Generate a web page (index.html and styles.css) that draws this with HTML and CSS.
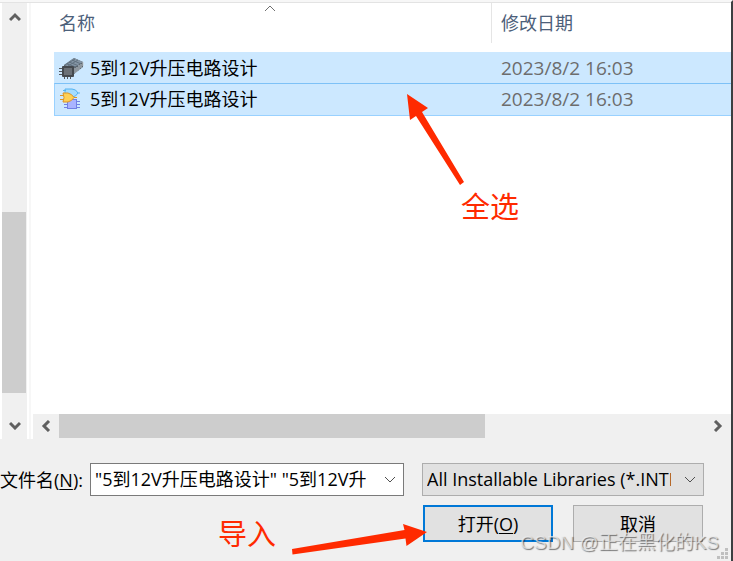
FILE: index.html
```html
<!DOCTYPE html>
<html lang="zh-CN">
<head>
    <meta charset="UTF-8">
    <meta name="viewport" content="width=device-width, initial-scale=1.0">
    <title>打开</title>
    <link rel="stylesheet" href="styles.css">
</head>
<body>
    <div class="dialog">
        <div class="browser">
            <div class="scrollbar scrollbar-y">
                <button class="scroll-btn" type="button" aria-label="向上滚动">
                    <svg width="12" height="10" viewBox="0 0 12 10"><path d="M1 8L6 3L11 8" /></svg>
                </button>
                <div class="track-y"><div class="thumb-y"></div></div>
                <button class="scroll-btn" type="button" aria-label="向下滚动">
                    <svg width="12" height="10" viewBox="0 0 12 10"><path d="M1 3L6 8L11 3" /></svg>
                </button>
            </div>

            <div class="file-pane">
                <table class="file-table">
                    <colgroup>
                        <col class="col-name">
                        <col>
                    </colgroup>
                    <thead>
                        <tr>
                            <th scope="col">名称
                                <svg class="sort-mark" width="12" height="8" viewBox="0 0 12 8"><path d="M1 7L6 2L11 7" /></svg>
                            </th>
                            <th scope="col" class="date-head">修改日期</th>
                        </tr>
                    </thead>
                    <tbody>
                        <tr class="file-row">
                            <td>
                                <div class="file-name">
                                    <svg class="file-icon" width="25" height="22" viewBox="0 0 25 22">
                                        <path d="M5 8L15 1L24 5V10L15 17L5 13Z" fill="#5a636b" />
                                        <path d="M5 8L15 1L24 5L14 11Z" fill="#8495a5" />
                                        <path d="M8 7L17 10M10 5L20 9M13 3L22 7M9 9L19 3M6 8L16 2" stroke="#61717f" stroke-width="1" />
                                        <path d="M16 11V16M18 10V15M20 8V13M22 7V11M24 5V9" stroke="#c3ccd3" stroke-width="1" />
                                        <rect x="3" y="9" width="12" height="11" rx="1" fill="#45494e" />
                                        <rect x="5" y="11" width="8" height="7" fill="#6b7076" />
                                        <path d="M0 11.5H3M0 14.5H3M0 17.5H3M5.5 20V22M8.5 20V22M11.5 20V22" stroke="#54585d" stroke-width="1" />
                                    </svg>
                                    <span>5到12V升压电路设计</span>
                                </div>
                            </td>
                            <td class="date">2023/8/2 16:03</td>
                        </tr>
                        <tr class="file-row focused">
                            <td>
                                <div class="file-name">
                                    <svg class="file-icon" width="25" height="22" viewBox="0 0 25 22">
                                        <path d="M6 1H13Q17 1 19 5Q17 9 13 9H6Z" fill="#a4dcff" stroke="#58b4f0" />
                                        <path d="M18 5H21M4 2.500H7" stroke="#58b4f0" stroke-width="1" />
                                        <rect x="8.500" y="11.500" width="9" height="9" fill="#a9b3ff" stroke="#7180e4" />
                                        <path d="M5 13.5H8M5 16.5H8M5 19.5H8M18 13.5H21M18 16.5H21M18 19.5H21" stroke="#7180e4" stroke-width="1" />
                                        <path d="M4 5H9Q13 6 15 9.500Q13 13 9 14H4Q6 9.500 4 5Z" fill="#ffd055" stroke="#dc9527" />
                                        <path d="M1 7.500H5M1 11.500H5M15 9.500H18" stroke="#dc9527" stroke-width="1" />
                                    </svg>
                                    <span>5到12V升压电路设计</span>
                                </div>
                            </td>
                            <td class="date">2023/8/2 16:03</td>
                        </tr>
                    </tbody>
                </table>

                <div class="scrollbar scrollbar-x">
                    <button class="scroll-btn" type="button" aria-label="向左滚动">
                        <svg width="10" height="12" viewBox="0 0 10 12"><path d="M8 1L3 6L8 11" /></svg>
                    </button>
                    <div class="track-x"><div class="thumb-x"></div></div>
                    <button class="scroll-btn" type="button" aria-label="向右滚动">
                        <svg width="10" height="12" viewBox="0 0 10 12"><path d="M2 1L7 6L2 11" /></svg>
                    </button>
                </div>
            </div>
        </div>

        <form class="footer">
            <div class="fields">
                <label class="name-label" for="filename">文件名(<u>N</u>):</label>
                <div class="combo">
                    <input id="filename" type="text" value='"5到12V升压电路设计" "5到12V升压电路设计"'>
                    <button class="combo-btn" type="button" aria-label="历史记录">
                        <svg width="12" height="8" viewBox="0 0 12 8"><path d="M1 1L6 6L11 1" /></svg>
                    </button>
                </div>
                <div class="filter">
                    <select aria-label="文件类型">
                        <option>All Installable Libraries (*.INTLIB;*.SCHLIB;*.PCBLIB)</option>
                    </select>
                    <svg class="filter-mark" width="12" height="8" viewBox="0 0 12 8"><path d="M1 1L6 6L11 1" /></svg>
                </div>
            </div>
            <div class="actions">
                <button class="btn btn-default" type="button">打开(<u>O</u>)</button>
                <button class="btn" type="button">取消</button>
            </div>
        </form>

        <svg class="grip" width="12" height="12" viewBox="0 0 12 12">
            <path d="M8 0h3v3h-3zM4 4h3v3h-3zM8 4h3v3h-3zM0 8h3v3h-3zM4 8h3v3h-3zM8 8h3v3h-3z" />
        </svg>

        <!-- notes drawn over the dialog -->
        <svg class="arrow arrow-select" width="58" height="92" viewBox="0 0 58 92">
            <path d="M1 0L22 14L16 18L58 88L54 91L10 22L4 26Z" />
        </svg>
        <span class="note note-select">全选</span>
        <svg class="arrow arrow-import" width="136" height="32" viewBox="0 0 136 32">
            <path d="M135 9L111 1L112.500 7L0 26L0.500 31.500L113.500 15.500L114.500 23Z" />
        </svg>
        <span class="note note-import">导入</span>
        <span class="watermark">CSDN @正在黑化的KS</span>
    </div>
</body>
</html>
```

FILE: styles.css
```css
:root {
    --panel: #f0f0f0;
    --thumb: #cdcdcd;
    --selected: #cce8ff;
    --selected-border: #99d1ff;
    --accent: #0078d7;
    --note: #ff2a00;
}

* {
    margin: 0;
    padding: 0;
    box-sizing: border-box;
}

body {
    font-family: "Open Sans", "Noto Sans CJK SC", sans-serif;
    font-size: 18px;
    line-height: 24px;
    color: #000;
    background: var(--panel);
}

input,
select,
button {
    font: inherit;
    color: inherit;
}

svg {
    display: block;
    fill: none;
}

.dialog {
    position: relative;
    display: flex;
    flex-direction: column;
    min-height: 100vh;
    border-top: 2px solid #f7f7f7;
    border-right: 2px solid #3c3f41;
    overflow: hidden;
}

.browser {
    flex: 1;
    display: flex;
    padding-left: 2px;
    border-top: 1px solid #e3e3e3;
    background: #fff;
}

/* scrollbars */
.scrollbar {
    display: flex;
    background: var(--panel);
}

.scrollbar-y {
    flex-direction: column;
    width: 25px;
}

.scroll-btn {
    display: flex;
    align-items: center;
    justify-content: center;
    width: 26px;
    height: 24px;
    border: none;
    background: none;
}

.scroll-btn svg {
    stroke: #606060;
    stroke-width: 3;
}

.scrollbar-y .scroll-btn {
    width: 25px;
    height: 28px;
}

.track-y {
    flex: 1;
    display: flex;
    flex-direction: column;
    justify-content: flex-end;
    padding: 0 1px 18px 0;
}

.thumb-y {
    height: 50%;
    background: var(--thumb);
}

.track-x {
    flex: 1;
}

.thumb-x {
    width: 66%;
    height: 24px;
    background: var(--thumb);
}

/* file list */
.file-pane {
    flex: 1;
    min-width: 0;
    display: flex;
    flex-direction: column;
    justify-content: space-between;
    margin-left: 2px;
    border-left: 2px solid #f7f7f7;
}

.scrollbar-x {
    margin-left: 2px;
    padding-bottom: 1px;
}

.file-table {
    margin-left: 23px;
    table-layout: fixed;
    border-collapse: separate;
    border-spacing: 0;
}

.col-name {
    width: 437px;
}

.file-table th {
    position: relative;
    height: 40px;
    padding-left: 5px;
    text-align: left;
    font-weight: normal;
    color: #4c607a;
}

.file-table .date-head {
    padding-left: 9px;
    border-left: 1px solid #e5e5e5;
}

.file-table thead::after {
    content: "";
    display: block;
    height: 9px;
}

.sort-mark {
    position: absolute;
    top: 1px;
    left: 210px;
    stroke: #707070;
}

.file-row td {
    height: 31px;
    background: var(--selected);
}

.file-row.focused td {
    height: 33px;
    padding-bottom: 2px;
    border-top: 1px solid #7dc1f7;
    border-bottom: 1px solid var(--selected-border);
}

.file-row.focused td:first-child {
    border-left: 1px solid var(--selected-border);
}

.file-name {
    display: flex;
    align-items: center;
    gap: 6px;
    padding-left: 5px;
}

.focused .file-name {
    padding-left: 4px;
}

.file-row .date {
    padding-left: 10px;
    font-size: 19px;
    color: #6d6d6d;
}

/* file name and buttons */
.footer {
    display: flex;
    flex-direction: column;
    gap: 9px;
    padding: 24px 27px 19px 0;
}

.fields {
    display: flex;
    align-items: center;
}

.name-label {
    width: 90px;
    padding-right: 8px;
    text-align: right;
    white-space: nowrap;
}

u {
    text-underline-offset: 2px;
    text-decoration-thickness: 1px;
}

.combo {
    flex: 1;
    min-width: 0;
    display: flex;
    height: 33px;
    margin-right: 18px;
    border: 1px solid #7a7a7a;
    background: #fff;
}

.combo input {
    flex: 1;
    min-width: 0;
    padding: 0 10px 2px 4px;
    border: none;
    outline: none;
    background: none;
}

.combo-btn {
    display: flex;
    align-items: center;
    justify-content: center;
    width: 27px;
    border: none;
    background: none;
}

.combo-btn svg,
.filter-mark {
    stroke: #505050;
}

.filter {
    position: relative;
    width: 282px;
}

.filter select {
    display: block;
    width: 100%;
    height: 33px;
    padding: 0 32px 2px 4px;
    border: 1px solid #adadad;
    border-radius: 0;
    background: #e1e1e1;
    appearance: none;
}

.filter-mark {
    position: absolute;
    top: 13px;
    right: 8px;
    pointer-events: none;
}

.actions {
    display: flex;
    justify-content: flex-end;
    gap: 20px;
    padding-right: 1px;
}

.btn {
    width: 130px;
    height: 37px;
    border: 1px solid #adadad;
    background: #e1e1e1;
}

.btn-default {
    border: 2px solid var(--accent);
}

.grip {
    position: absolute;
    right: 2px;
    bottom: 1px;
    fill: #bfbfbf;
}

/* notes over the dialog */
.arrow {
    position: absolute;
    fill: var(--note);
}

.arrow-select {
    top: 92px;
    left: 406px;
}

.arrow-import {
    top: 521px;
    left: 292px;
}

.note {
    position: absolute;
    font-size: 29px;
    line-height: 36px;
    color: var(--note);
}

.note-select {
    top: 187px;
    left: 461px;
}

.note-import {
    top: 514px;
    left: 218px;
}

.watermark {
    position: absolute;
    right: 12px;
    bottom: 6px;
    font-family: "Liberation Sans", "Noto Sans CJK SC", sans-serif;
    font-size: 19px;
    color: rgba(240, 240, 240, 0.7);
    text-shadow: 1px 1px 1px rgba(0, 0, 0, 0.5);
    white-space: nowrap;
    pointer-events: none;
}
```
